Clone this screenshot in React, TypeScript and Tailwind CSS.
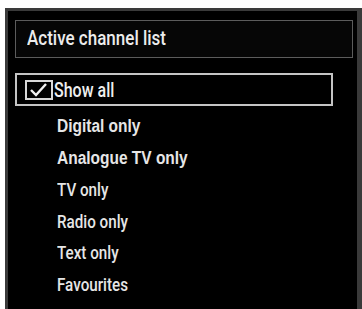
import React from 'react';

const items = [
  { label: 'Digital only', bold: true },
  { label: 'Analogue TV only', bold: true },
  { label: 'TV only', bold: false },
  { label: 'Radio only', bold: false },
  { label: 'Text only', bold: false },
  { label: 'Favourites', bold: false },
];

const medium = { fontFamily: 'Roboto, "Liberation Sans", sans-serif' };

export default function App() {
  return (
    <div
      className="w-[362px] h-[309px] bg-white pt-[8px] pl-[5px] overflow-hidden"
      style={{ fontFamily: '"Liberation Sans", Arial, sans-serif' }}
    >
      <div className="h-[301px] w-[357px] bg-black border-l-[3px] border-t-[3px] border-r-[5px] border-[#3a3a3a] pt-[9px] pl-[7px]">
        {/* title */}
        <div className="w-[338px] h-[38px] border border-[#5c5c5c] bg-[#060606] flex items-center pl-[11px]">
          <span
            className="inline-block origin-left scale-x-[0.81] text-[21px] font-medium text-[#ececec] whitespace-nowrap"
            style={medium}
          >
            Active channel list
          </span>
        </div>

        {/* selected row */}
        <div className="mt-[15px] w-[318px] h-[33px] border-2 border-[#c4c4c4] flex items-center pl-[8px]">
          <svg width="28" height="20" viewBox="0 0 28 20" className="shrink-0">
            <rect x="1" y="1" width="26" height="18" fill="none" stroke="#d8d8d8" strokeWidth="2" />
            <polyline points="6,10 11,15 21,4" fill="none" stroke="#f0f0f0" strokeWidth="2.4" />
          </svg>
          <span
            className="inline-block origin-left scale-x-[0.8] text-[20px] font-medium text-[#efefef] whitespace-nowrap ml-[1px]"
            style={medium}
          >
            Show all
          </span>
        </div>

        {/* options */}
        <ul className="mt-[5px] pl-[42px]">
          {items.map((it) => (
            <li key={it.label} className="h-[31.5px] leading-[31.5px]">
              {it.bold ? (
                <span className="inline-block origin-left scale-x-[0.86] text-[18px] font-bold text-[#e6e6e6] whitespace-nowrap">
                  {it.label}
                </span>
              ) : (
                <span
                  className="inline-block origin-left scale-x-[0.8] text-[19px] font-medium text-[#e6e6e6] whitespace-nowrap"
                  style={medium}
                >
                  {it.label}
                </span>
              )}
            </li>
          ))}
        </ul>
      </div>
    </div>
  );
}
